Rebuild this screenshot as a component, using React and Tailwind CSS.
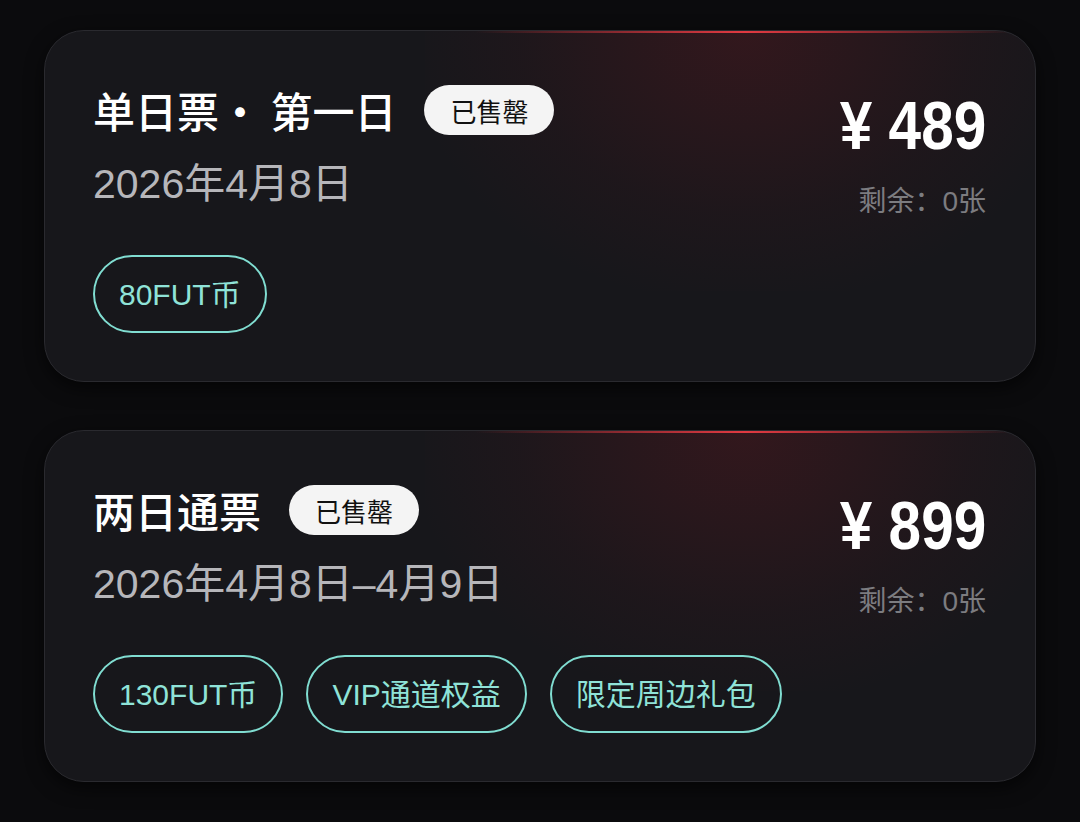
import React from 'react';

const tickets = [
  {
    name: '单日票· 第一日',
    date: '2026年4月8日',
    price: '489',
    left: 0,
    perks: ['80FUT币'],
  },
  {
    name: '两日通票',
    date: '2026年4月8日–4月9日',
    price: '899',
    left: 0,
    perks: ['130FUT币', 'VIP通道权益', '限定周边礼包'],
  },
];

const cjk = { fontFamily: '"Noto Sans CJK SC", "Noto Sans", sans-serif' };
const mixed = { fontFamily: '"Liberation Sans", "Noto Sans CJK SC", sans-serif' };

const TicketCard = ({ t }) => (
  <div className="relative overflow-hidden rounded-[40px] border border-[#2a2a2f] bg-[#17171b] shadow-[0_6px_18px_rgba(0,0,0,0.6)]">
    {/* red glow on the top edge */}
    <div className="pointer-events-none absolute left-[380px] top-0 h-[260px] w-[640px] bg-[radial-gradient(ellipse_at_50%_0%,rgba(150,25,35,0.22),rgba(110,20,30,0.08)_50%,transparent_75%)]" />
    <div className="pointer-events-none absolute left-[430px] top-0 h-[2px] w-[540px] bg-gradient-to-r from-transparent via-[#e23a42] to-transparent" />

    <div className="relative flex justify-between pl-[48px] pr-[49px] pt-[53px] pb-[48px]" style={cjk}>
      <div>
        <div className="flex items-center gap-[28px]">
          <h2 className="text-[42px] leading-[52px] font-medium text-white">{t.name}</h2>
          <span className="rounded-full bg-[#f4f4f4] px-[26px] h-[50px] flex items-center text-[26px] text-[#111]">已售罄</span>
        </div>
        <p className="mt-[25px] text-[41px] leading-[46px] text-[#b6b6ba]" style={mixed}>{t.date}</p>
        <div className="mt-[48px] flex gap-[23px]">
          {t.perks.map(p => (
            <span
              key={p}
              style={mixed}
              className="flex h-[78px] items-center rounded-full border-[2.5px] border-[#80ddd1] px-[24px] text-[30px] text-[#8fe3d8]"
            >
              {p}
            </span>
          ))}
        </div>
      </div>

      <div className="flex flex-col items-end">
        <div
          className="mt-[4px] origin-right scale-x-[0.86] text-[68px] leading-[74px] font-bold text-white whitespace-nowrap"
          style={{ fontFamily: '"Liberation Sans", sans-serif' }}
        >
          ¥ {t.price}
        </div>
        <p className="mt-[20px] text-[28px] leading-[34px] text-[#7c7c80]">
          剩余：<span style={mixed}>{t.left}</span>张
        </p>
      </div>
    </div>
  </div>
);

export default function App() {
  return (
    <div className="min-h-[822px] w-full bg-[#0b0b0d] px-[44px] pt-[30px] flex flex-col gap-[48px]">
      {tickets.map(t => (
        <TicketCard key={t.name} t={t} />
      ))}
    </div>
  );
}
